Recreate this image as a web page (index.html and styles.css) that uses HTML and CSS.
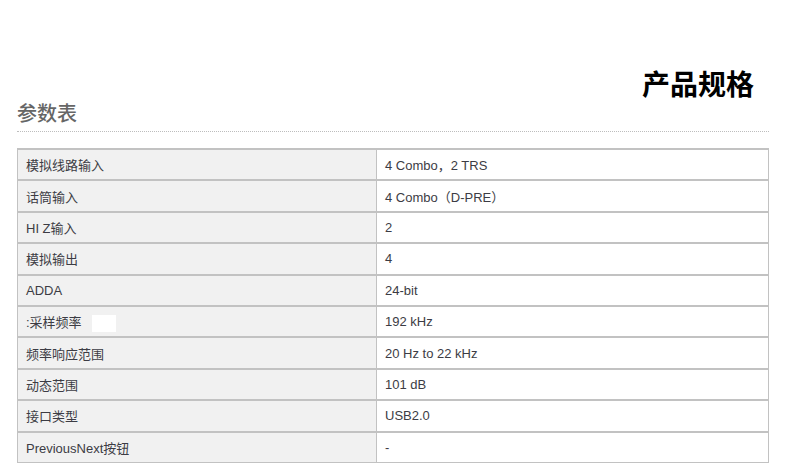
FILE: index.html
```html
<!DOCTYPE html>
<html lang="zh">
<head>
<meta charset="utf-8">
<link rel="stylesheet" href="styles.css">
</head>
<body>
<div class="page">
  <h1 class="title">产品规格</h1>
  <h2 class="subtitle">参数表</h2>
  <div class="dots"></div>
  <table class="spec">
    <tr><td class="k">模拟线路输入</td><td class="v">4 Combo，2 TRS</td></tr>
    <tr><td class="k">话筒输入</td><td class="v">4 Combo（D-PRE）</td></tr>
    <tr><td class="k">HI Z输入</td><td class="v">2</td></tr>
    <tr><td class="k">模拟输出</td><td class="v">4</td></tr>
    <tr><td class="k">ADDA</td><td class="v">24-bit</td></tr>
    <tr><td class="k">:采样频率<span class="blank"></span></td><td class="v">192 kHz</td></tr>
    <tr><td class="k">频率响应范围</td><td class="v">20 Hz to 22 kHz</td></tr>
    <tr><td class="k">动态范围</td><td class="v">101 dB</td></tr>
    <tr><td class="k">接口类型</td><td class="v">USB2.0</td></tr>
    <tr><td class="k">PreviousNext按钮</td><td class="v">-</td></tr>
  </table>
</div>
</body>
</html>
```
FILE: styles.css
```css
html, body {
  margin: 0;
  padding: 0;
  background: #fff;
}
.page {
  padding: 66px 21px 0 17px;
  font-family: "Liberation Sans", "Noto Sans CJK SC", sans-serif;
}
.title {
  margin: 0;
  padding-right: 15px;
  text-align: right;
  font-family: "Noto Sans CJK SC", sans-serif;
  font-size: 28px;
  font-weight: 700;
  line-height: 34px;
  color: #000;
}
.subtitle {
  margin: 0;
  font-family: "Noto Sans CJK SC", sans-serif;
  font-size: 20px;
  font-weight: 500;
  line-height: 26px;
  color: #666;
}
.dots {
  margin-top: 5px;
  border-top: 1px dotted #bdbdbd;
}
.spec {
  margin-top: 16px;
  width: 100%;
  border-collapse: collapse;
  font-size: 13px;
  color: #3c3c44;
}
.spec td {
  height: 29.4px;
  padding: 0 8px;
  border: 1px solid #c2c2c2;
  border-top-width: 2px;
  vertical-align: middle;
}
.spec .k {
  width: 342px;
  background: #f1f1f1;
}
.spec .v {
  background: #fff;
}
.blank {
  display: inline-block;
  width: 24px;
  height: 17px;
  margin-left: 10px;
  vertical-align: middle;
  background: #fff;
}
```
